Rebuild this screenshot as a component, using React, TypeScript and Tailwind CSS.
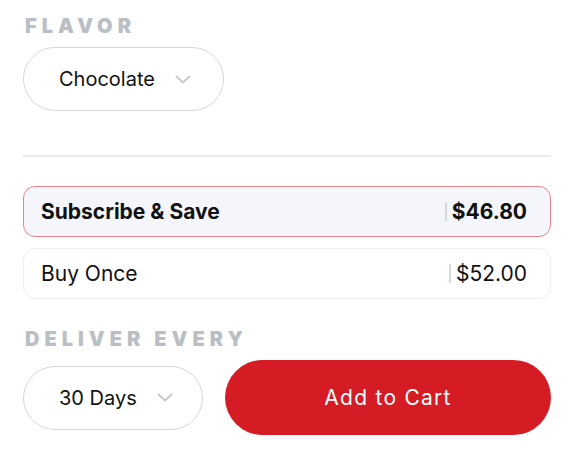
import React from "react";

function Chevron() {
  return (
    <svg width="16" height="9" viewBox="0 0 16 9" fill="none">
      <path d="M1 1l7 6.5L15 1" stroke="#c6cacd" strokeWidth="2" />
    </svg>
  );
}

function Label({ children }: { children: React.ReactNode }) {
  return (
    <div className="text-[20px] leading-[20px] font-black tracking-[0.25em] text-[#b9bfc4]">
      {children}
    </div>
  );
}

function Select({ value, width }: { value: string; width: string }) {
  return (
    <button
      className={`flex h-[64px] ${width} shrink-0 items-center gap-[20px] rounded-full border border-[#d4d7da] bg-white pl-[35px] text-[20px] text-[#111]`}
    >
      <span>{value}</span>
      <Chevron />
    </button>
  );
}

function PlanRow({
  name,
  price,
  active,
}: {
  name: string;
  price: string;
  active?: boolean;
}) {
  return (
    <div
      className={`flex h-[51px] items-center justify-between rounded-[12px] border pl-[17px] pr-[23px] text-[21px] text-[#111] ${
        active
          ? "border-[#e8848a] bg-[#f5f6fb] font-bold"
          : "border-[#eceeef] bg-white"
      }`}
    >
      <span>{name}</span>
      <div className="flex items-center gap-[5px]">
        <div className="h-[19px] w-[2px] bg-[#d6d9dc]"></div>
        <span>{price}</span>
      </div>
    </div>
  );
}

export default function App() {
  return (
    <main
      className="min-h-[457px] bg-white pt-[16px]"
      style={{ fontFamily: "Inter, 'Noto Sans', sans-serif" }}
    >
      <div className="ml-[23px] w-[528px]">
        <div className="pl-[2px]">
          <Label>FLAVOR</Label>
        </div>
        <div className="mt-[11px]">
          <Select value="Chocolate" width="w-[201px]" />
        </div>

        <div className="mt-[44px] h-[2px] bg-[#ececec]"></div>

        <div className="mt-[29px] flex flex-col gap-[11px]">
          <PlanRow name="Subscribe & Save" price="$46.80" active />
          <PlanRow name="Buy Once" price="$52.00" />
        </div>

        <div className="mt-[30px] pl-[2px]">
          <Label>DELIVER EVERY</Label>
        </div>
        <div className="mt-[11px] flex items-center gap-[22px]">
          <Select value="30 Days" width="w-[180px]" />
          <button className="flex h-[75px] flex-1 items-center justify-center rounded-full bg-[#d51b23] text-[21px] tracking-[0.06em] text-white">
            Add to Cart
          </button>
        </div>
      </div>
    </main>
  );
}
